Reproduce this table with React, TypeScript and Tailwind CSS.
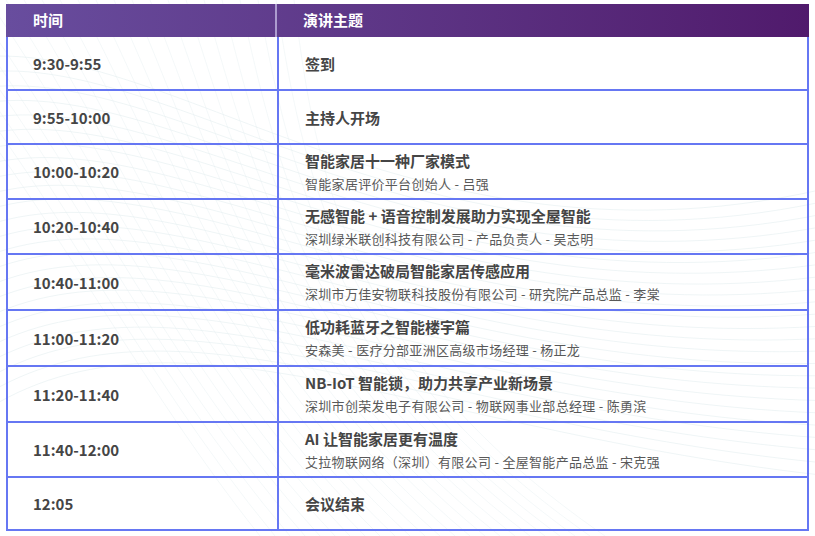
import React, { ReactElement } from "react"

interface Session {
  time: string
  title: string
  sub?: string
  h: string
}

const sessions: Session[] = [
  { time: "9:30-9:55", title: "签到", h: "h-[54px]" },
  { time: "9:55-10:00", title: "主持人开场", h: "h-[54px]" },
  { time: "10:00-10:20", title: "智能家居十一种厂家模式", sub: "智能家居评价平台创始人 - 吕强", h: "h-[55px]" },
  { time: "10:20-10:40", title: "无感智能 + 语音控制发展助力实现全屋智能", sub: "深圳绿米联创科技有限公司 - 产品负责人 - 吴志明", h: "h-[55px]" },
  { time: "10:40-11:00", title: "毫米波雷达破局智能家居传感应用", sub: "深圳市万佳安物联科技股份有限公司 - 研究院产品总监 - 李棠", h: "h-[56px]" },
  { time: "11:00-11:20", title: "低功耗蓝牙之智能楼宇篇", sub: "安森美 - 医疗分部亚洲区高级市场经理 - 杨正龙", h: "h-[56px]" },
  { time: "11:20-11:40", title: "NB-IoT 智能锁，助力共享产业新场景", sub: "深圳市创荣发电子有限公司 - 物联网事业部总经理 - 陈勇滨", h: "h-[56px]" },
  { time: "11:40-12:00", title: "AI 让智能家居更有温度", sub: "艾拉物联网络（深圳）有限公司 - 全屋智能产品总监 - 宋克强", h: "h-[55px]" },
  { time: "12:05", title: "会议结束", h: "h-[51px]" },
]

function Waves(): ReactElement {
  const lines = Array.from({ length: 24 }, (_, i) => i)
  return (
    <svg className="absolute inset-0" width="815" height="536" viewBox="0 0 815 536">
      {lines.map((i) => (
        <path
          key={"a" + i}
          d={`M -40 ${60 + i * 16} C 160 ${20 + i * 11}, 420 ${300 + i * 6}, 860 ${180 + i * 13}`}
          fill="none"
          stroke="#dde9ed"
          strokeWidth="0.8"
          opacity="0.6"
        />
      ))}
      {lines.map((i) => (
        <path
          key={"b" + i}
          d={`M ${-120 + i * 18} 0 C ${40 + i * 12} 180, ${120 + i * 10} 360, ${260 + i * 15} 536`}
          fill="none"
          stroke="#e2edf0"
          strokeWidth="0.7"
          opacity="0.55"
        />
      ))}
    </svg>
  )
}

export default function App(): ReactElement {
  return (
    <div className="relative w-[815px] h-[536px] overflow-hidden bg-white font-['Noto_Sans_CJK_SC',sans-serif]">
      <Waves />
      <div className="relative ml-[6px] pt-[4px] w-[803px]">
        <div className="flex h-[33px] bg-linear-to-r from-[#684d9e] to-[#501a6c] text-white text-[15px] font-bold">
          <div className="w-[271px] border-r-2 border-[#ad9ccf] pl-[27px] flex items-center">时间</div>
          <div className="flex-1 pl-[26px] flex items-center">演讲主题</div>
        </div>
        <div className="border-x-2 border-b-2 border-[#6677f3]">
          {sessions.map((s, i) => (
            <div
              key={s.time}
              className={`flex ${s.h} ${i < sessions.length - 1 ? "border-b-2 border-[#6677f3]" : ""}`}
            >
              <div className="w-[271px] border-r-2 border-[#6677f3] pl-[25px] pt-[2px] flex items-center text-[15px] font-bold text-[#454545]">
                {s.time}
              </div>
              <div className="flex-1 pl-[26px] flex flex-col justify-center">
                <div className="text-[15px] font-bold text-[#454545] leading-[23px]">{s.title}</div>
                {s.sub && (
                  <div className="text-[13px] tracking-[0.3px] text-[#595959] leading-[23px]">{s.sub}</div>
                )}
              </div>
            </div>
          ))}
        </div>
      </div>
    </div>
  )
}
